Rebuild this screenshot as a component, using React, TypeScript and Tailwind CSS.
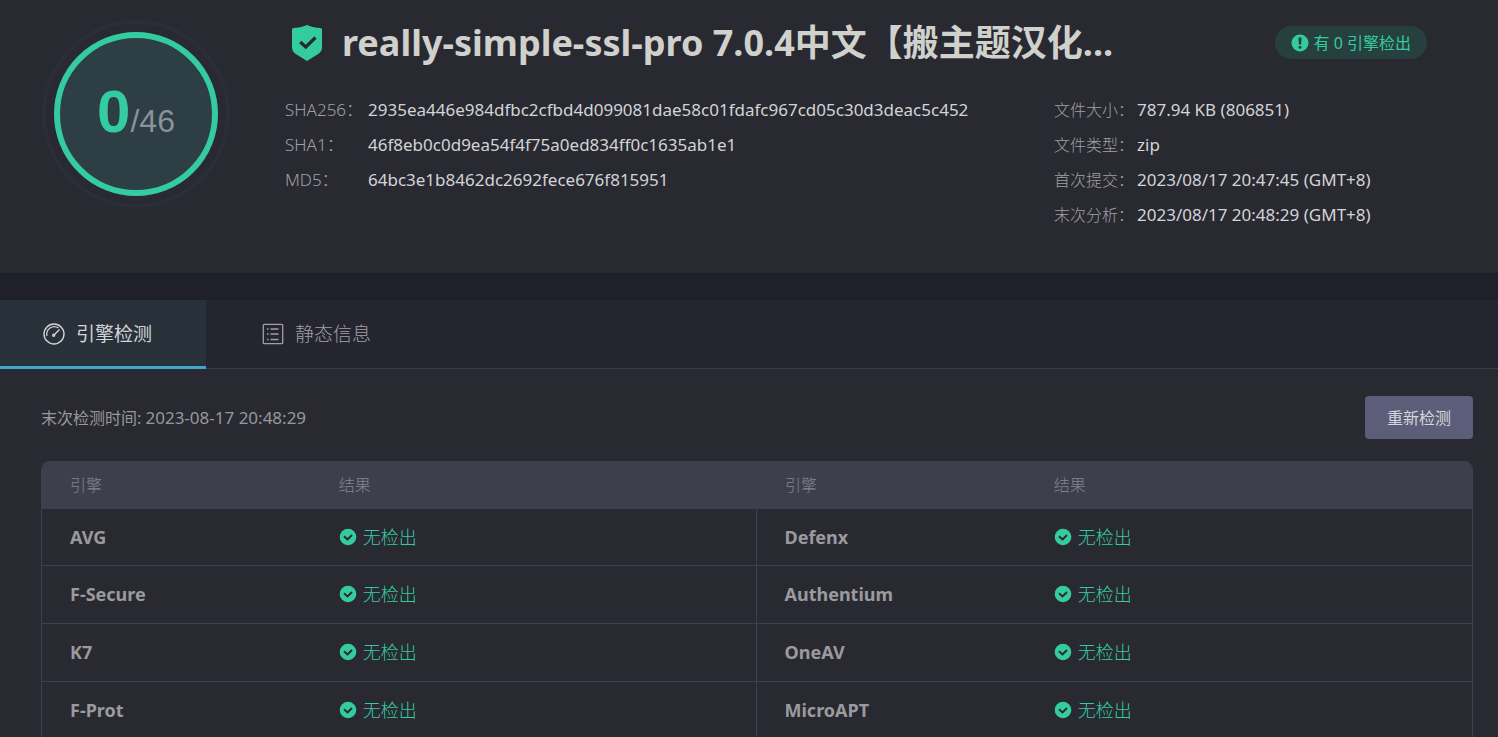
type Engine = { name: string; result: string };

const ENGINES: [Engine, Engine][] = [
  [
    { name: "AVG", result: "无检出" },
    { name: "Defenx", result: "无检出" },
  ],
  [
    { name: "F-Secure", result: "无检出" },
    { name: "Authentium", result: "无检出" },
  ],
  [
    { name: "K7", result: "无检出" },
    { name: "OneAV", result: "无检出" },
  ],
  [
    { name: "F-Prot", result: "无检出" },
    { name: "MicroAPT", result: "无检出" },
  ],
];

const HASHES = [
  {
    label: "SHA256：",
    value: "2935ea446e984dfbc2cfbd4d099081dae58c01fdafc967cd05c30d3deac5c452",
  },
  { label: "SHA1：", value: "46f8eb0c0d9ea54f4f75a0ed834ff0c1635ab1e1" },
  { label: "MD5：", value: "64bc3e1b8462dc2692fece676f815951" },
];

const FILE_INFO = [
  { label: "文件大小：", value: "787.94 KB (806851)" },
  { label: "文件类型：", value: "zip" },
  { label: "首次提交：", value: "2023/08/17 20:47:45 (GMT+8)" },
  { label: "末次分析：", value: "2023/08/17 20:48:29 (GMT+8)" },
];

export default function App() {
  return (
    <div
      lang="zh-CN"
      className="min-h-screen bg-[#292932] font-['Noto_Sans','Noto_Sans_CJK_SC',sans-serif] text-base text-[#d3d4d6]"
    >
      <Summary />
      <div className="h-[27px] bg-[#20202b]" />
      <Tabs />
      <main className="pt-[27px] pr-[25px] pl-[41px]">
        <div className="flex items-center justify-between">
          <p className="text-[#98989c]">
            末次检测时间:{" "}
            <time className="text-[17px]">2023-08-17 20:48:29</time>
          </p>
          <button
            type="button"
            className="h-[43px] w-[108px] rounded bg-[#5c5d78] text-[#d5d8d8]"
          >
            重新检测
          </button>
        </div>
        <EngineTable />
      </main>
    </div>
  );
}

function Summary() {
  return (
    <header className="flex h-[273px] pt-5 pl-[42px]">
      <Score hits={0} total={46} />
      <div className="ml-[55px] min-w-0 flex-1">
        <div className="flex h-[45px] items-center justify-between pr-[71px]">
          <div className="flex items-center">
            <ShieldIcon />
            <h1 className="ml-5 text-4xl leading-[52px] font-bold whitespace-nowrap text-[#d0d1cd]">
              really-simple-ssl-pro 7.0.4中文【搬主题汉化...
            </h1>
          </div>
          <span className="flex h-[33px] shrink-0 items-center gap-[5px] rounded-full bg-[#26403f] px-4 text-[#35cba0]">
            <AlertIcon />有 0 引擎检出
          </span>
        </div>
        <div className="mt-[27px] flex">
          <InfoList items={HASHES} className="flex-1" labelSize="text-[17px]" />
          <InfoList
            items={FILE_INFO}
            className="w-[444px]"
            labelSize="text-base"
          />
        </div>
      </div>
    </header>
  );
}

function Score({ hits, total }: { hits: number; total: number }) {
  return (
    <div className="size-[188px] shrink-0 rounded-full border-4 border-[#2b2e38] p-2">
      <div className="flex size-full items-baseline justify-center rounded-full border-[6px] border-[#35cba0] bg-[#2d3e44] pt-11 font-['Liberation_Sans',sans-serif] leading-none">
        <span className="text-[60px] leading-none font-bold text-[#35cba0]">
          {hits}
        </span>
        <span className="text-[32px] leading-none text-[#8b929a]">
          /{total}
        </span>
      </div>
    </div>
  );
}

function InfoList({
  items,
  className,
  labelSize,
}: {
  items: { label: string; value: string }[];
  className: string;
  labelSize: string;
}) {
  return (
    <dl className={className}>
      {items.map((item) => (
        <div key={item.label} className="flex h-[35px] items-center">
          <dt
            className={`w-[83px] shrink-0 font-light whitespace-nowrap text-[#a0a0a4] ${labelSize}`}
          >
            {item.label}
          </dt>
          <dd className="text-[17px]">{item.value}</dd>
        </div>
      ))}
    </dl>
  );
}

function Tabs() {
  return (
    <nav className="flex h-[69px] border-b border-[#3c3c48] bg-[#25252f] text-[19px]">
      <a
        href="#engines"
        aria-current="page"
        className="flex h-[69px] w-[206px] items-center gap-[11px] border-b-[3px] border-[#42a5c9] bg-[#28303a] pt-0.5 pl-[43px]"
      >
        <GaugeIcon />
        引擎检测
      </a>
      <a
        href="#static"
        className="flex items-center gap-[11px] pl-14 font-light text-[#a0a0a4]"
      >
        <ListIcon />
        静态信息
      </a>
    </nav>
  );
}

function EngineTable() {
  return (
    <div className="mt-[22px] overflow-hidden rounded-t-lg border border-[#40404c]">
      <table className="w-full table-fixed border-collapse text-left">
        <colgroup>
          <col className="w-[18.8%]" />
          <col className="w-[31.2%]" />
          <col className="w-[18.8%]" />
          <col className="w-[31.2%]" />
        </colgroup>
        <thead>
          <tr className="h-[47px] bg-[#3e3f4d] text-[#85858f]">
            <th className="pb-0.5 pl-7 font-light">引擎</th>
            <th className="pb-0.5 pl-7 font-light">结果</th>
            <th className="pb-0.5 pl-7 font-light">引擎</th>
            <th className="pb-0.5 pl-7 font-light">结果</th>
          </tr>
        </thead>
        <tbody>
          {ENGINES.map(([left, right]) => (
            <tr
              key={left.name}
              className="h-[58px] border-b border-[#40404c] text-lg first:h-14"
            >
              <EngineCells engine={left} />
              <EngineCells engine={right} divided />
            </tr>
          ))}
        </tbody>
      </table>
    </div>
  );
}

function EngineCells({
  engine,
  divided,
}: {
  engine: Engine;
  divided?: boolean;
}) {
  return (
    <>
      <td
        className={
          divided
            ? "border-l border-[#40404c] pl-[27px] font-bold text-[#9b9a9d]"
            : "pl-7 font-bold text-[#9b9a9d]"
        }
      >
        {engine.name}
      </td>
      <td className="pl-7 font-light text-[#35cba0]">
        <span className="flex items-center gap-1.5">
          <CheckIcon />
          {engine.result}
        </span>
      </td>
    </>
  );
}

function ShieldIcon() {
  return (
    <svg
      viewBox="0 0 30 36"
      className="ml-[7px] h-9 w-[30px] shrink-0"
      aria-hidden="true"
    >
      <path
        d="M15 0C19 2 25 3 28.500 3Q30 3 30 5V23Q30 26 27 28.500L15 36 3 28.500Q0 26 0 23V5Q0 3 1.500 3C5 3 11 2 15 0Z"
        fill="#35cba0"
      />
      <path
        d="M8.200 17 13.800 22 23.500 12.500"
        fill="none"
        stroke="#292932"
        strokeWidth="3.200"
      />
    </svg>
  );
}

function AlertIcon() {
  return (
    <svg viewBox="0 0 18 18" className="size-[18px]" aria-hidden="true">
      <circle cx="9" cy="9" r="8.500" fill="#35cba0" />
      <path d="M7.400 3.500h3.200l-.5 7H7.900z" fill="#26403f" />
      <circle cx="9" cy="13.200" r="1.500" fill="#26403f" />
    </svg>
  );
}

function CheckIcon() {
  return (
    <svg viewBox="0 0 18 18" className="size-[18px]" aria-hidden="true">
      <circle cx="9" cy="9" r="8.300" fill="#35cba0" />
      <path
        d="M5 8.300 8.500 11.400 13 7"
        fill="none"
        stroke="#292932"
        strokeWidth="2"
      />
    </svg>
  );
}

function GaugeIcon() {
  return (
    <svg
      viewBox="0 0 22 22"
      className="size-[22px]"
      fill="none"
      stroke="currentColor"
      strokeWidth="1.400"
      aria-hidden="true"
    >
      <circle cx="11" cy="11" r="10" />
      <path d="M4 13A7.500 7.500 0 0 1 15.500 5" strokeWidth="1.200" />
      <path d="M11.300 11.700 16.500 6.500" />
      <circle cx="10.700" cy="12.300" r="1" />
    </svg>
  );
}

function ListIcon() {
  return (
    <svg
      viewBox="0 0 22 22"
      className="size-[22px]"
      fill="none"
      stroke="currentColor"
      strokeWidth="1.300"
      aria-hidden="true"
    >
      <rect x="1.300" y="1.300" width="19.400" height="19.400" rx="1" />
      <path d="M8.500 6h8M8.500 11h8M8.500 16.500h8M5 6h1.500M5 11h1.500M5 16.500h1.500" />
    </svg>
  );
}
